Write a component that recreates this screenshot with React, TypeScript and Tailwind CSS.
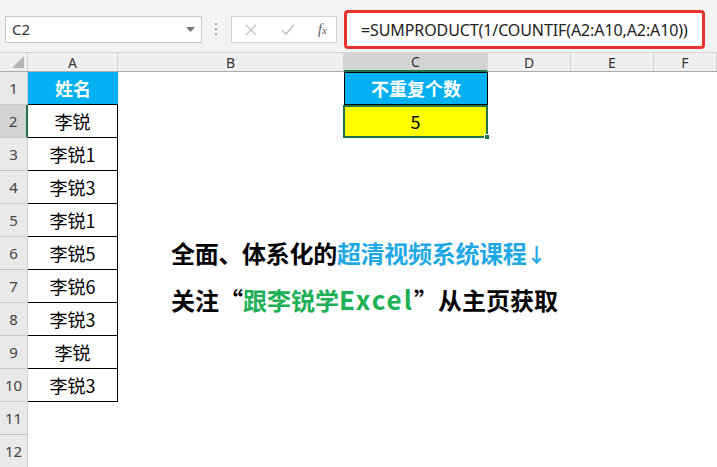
const cjk = { fontFamily: '"Noto Sans CJK SC", "Noto Sans", sans-serif' }
const ui = { fontFamily: '"Noto Sans", "Liberation Sans", sans-serif' }

const names = ['李锐', '李锐1', '李锐3', '李锐1', '李锐5', '李锐6', '李锐3', '李锐', '李锐3']
const cols = [
  { key: 'A', w: 'w-[90px]' },
  { key: 'B', w: 'w-[226px]' },
  { key: 'C', w: 'w-[144px]' },
  { key: 'D', w: 'w-[83px]' },
  { key: 'E', w: 'w-[83px]' },
  { key: 'F', w: 'flex-1' },
]

function Toolbar() {
  return (
    <div className="h-[53px] bg-[#f3f3f3] flex items-start border-b border-[#d6d6d6]" style={ui}>
      {/* 名称框 */}
      <div className="ml-[5px] mt-[16px] w-[197px] h-[27px] bg-white border border-[#c8c8c8] flex items-center justify-between px-[6px]">
        <span className="text-[15px] text-[#333]">C2</span>
        <svg width="9" height="5" viewBox="0 0 9 5"><path d="M0 0h9L4.5 5z" fill="#777" /></svg>
      </div>
      <div className="mt-[23px] ml-[13px] flex flex-col gap-[3px]">
        <div className="w-[2px] h-[2px] bg-[#aaa]" />
        <div className="w-[2px] h-[2px] bg-[#aaa]" />
        <div className="w-[2px] h-[2px] bg-[#aaa]" />
      </div>
      {/* 取消/确认/fx */}
      <div className="ml-[14px] mt-[16px] w-[106px] h-[27px] bg-white border border-[#d0d0d0] flex items-center">
        <svg className="ml-[13px]" width="12" height="12" viewBox="0 0 12 12"><path d="M1 1l10 10M11 1L1 11" stroke="#c4c4c4" strokeWidth="1.4" /></svg>
        <svg className="ml-[24px]" width="14" height="11" viewBox="0 0 14 11"><path d="M1 6l4 4 8-9" stroke="#c4c4c4" strokeWidth="1.6" fill="none" /></svg>
        <span className="ml-[23px] text-[14px] italic text-[#555]" style={{ fontFamily: '"Liberation Serif", serif' }}>
          f<span className="text-[11px]">x</span>
        </span>
      </div>
      {/* 编辑栏 + 红框 */}
      <div className="ml-[7px] mt-[10px] w-[361px] h-[39px] border-[3px] border-[#e8322d] rounded-[4px] bg-white flex items-center pl-[14px]">
        <span className="text-[16px] text-[#222] tracking-[-0.1px]">=SUMPRODUCT(1/COUNTIF(A2:A10,A2:A10))</span>
      </div>
    </div>
  )
}

function ColHeader() {
  return (
    <div className="flex h-[19px] bg-[#efefef] border-b border-[#ababab]" style={ui}>
      <div className="w-[28px] relative border-r border-[#cfcfcf]">
        <svg className="absolute right-[3px] bottom-[3px]" width="12" height="12" viewBox="0 0 12 12"><path d="M12 0V12H0z" fill="#b5b5b5" /></svg>
      </div>
      {cols.map((c) => (
        <div
          key={c.key}
          className={`${c.w} flex items-center justify-center text-[14px] text-[#333] border-r border-[#d4d4d4] ${
            c.key === 'C' ? 'bg-[#d3d3d3] border-b-2 border-b-[#217346] -mb-px' : ''
          }`}
        >
          {c.key}
        </div>
      ))}
    </div>
  )
}

function RowHead({ n, sel }: { n: number; sel?: boolean }) {
  return (
    <div
      className={`w-[28px] shrink-0 flex items-center justify-center text-[15px] text-[#444] border-b border-[#c9c9c9] ${
        sel ? 'bg-[#d3d3d3] border-r-2 border-r-[#217346]' : 'bg-[#e9e9e9] border-r border-r-[#cfcfcf]'
      }`}
      style={ui}
    >
      {n}
    </div>
  )
}

export default function App() {
  return (
    <div className="w-[717px] h-[467px] overflow-hidden bg-white relative">
      <Toolbar />
      <ColHeader />
      <div style={cjk}>
        {/* 第1行 */}
        <div className="flex h-[33px]">
          <RowHead n={1} />
          <div className="w-[90px] bg-[#00b0f0] text-white font-bold text-[18px] flex items-center justify-center border-b border-black">姓名</div>
          <div className="w-[226px]" />
          <div className="w-[144px] bg-[#00b0f0] text-white font-bold text-[18px] flex items-center justify-center border border-black">不重复个数</div>
        </div>
        {names.map((name, i) => (
          <div key={i} className="flex h-[33px]">
            <RowHead n={i + 2} sel={i === 0} />
            <div className="w-[90px] border-r border-b border-black text-[18px] text-black flex items-center justify-center">{name}</div>
            <div className="w-[226px]" />
            {i === 0 && (
              <div className="w-[145px] -ml-px bg-[#ffff00] border-2 border-[#217346] text-[18px] text-black flex items-center justify-center relative">
                5
                <div className="absolute -right-[4px] -bottom-[4px] w-[6px] h-[6px] bg-[#217346] border border-white" />
              </div>
            )}
          </div>
        ))}
        {[11, 12].map((n) => (
          <div key={n} className="flex h-[33px]">
            <RowHead n={n} />
          </div>
        ))}
      </div>

      {/* 文本框 */}
      <div className="absolute left-[171px] top-[231px] font-bold text-[24px] leading-[44px] text-black" style={cjk}>
        <div className="tracking-[-0.3px]">
          全面、体系化的<span className="text-[#1fa8e6]">超清视频系统课程<span className="inline-block w-[10px] text-[20px]">↓</span></span>
        </div>
        <div>
          关注<span className="inline-block w-[1em] text-right">“</span>
          <span className="text-[#1db055]">跟李锐学<span className="text-[26px] tracking-[2px]">Excel</span></span>
          <span className="inline-block w-[24px] text-left">”</span>从主页获取
        </div>
      </div>
    </div>
  )
}
